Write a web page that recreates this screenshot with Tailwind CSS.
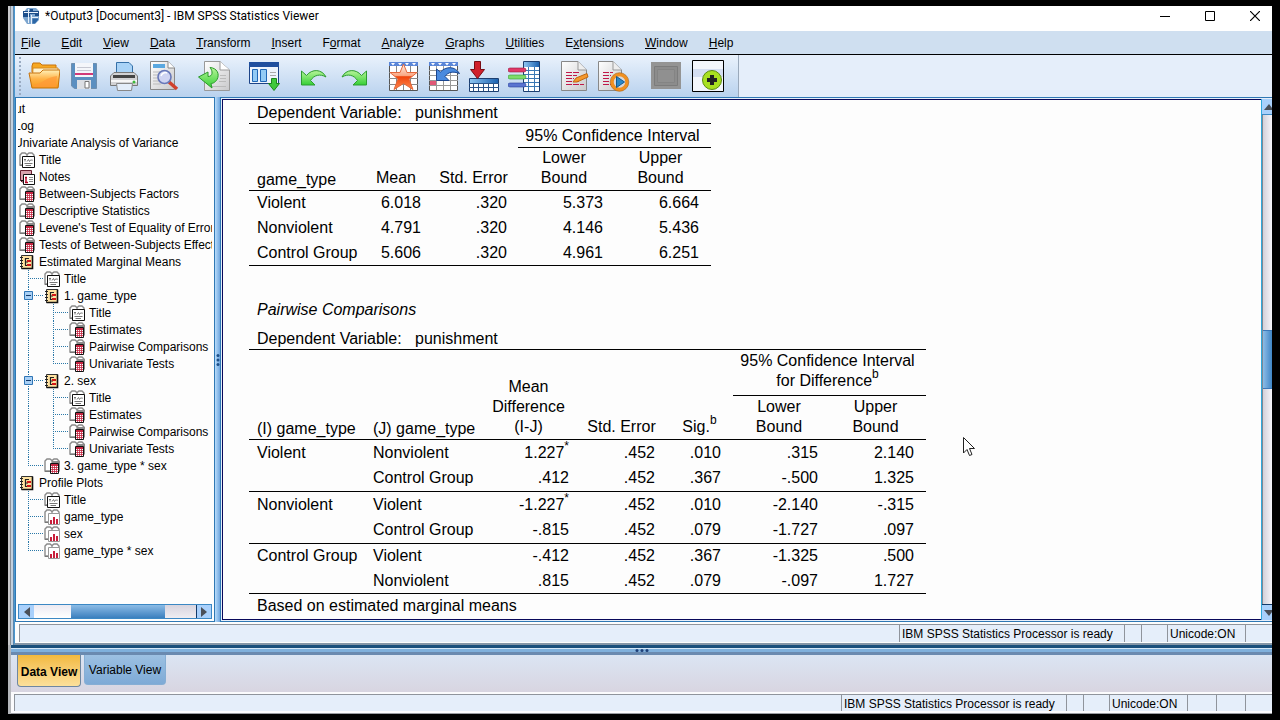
<!DOCTYPE html>
<html lang="en">
  <head>
    <meta charset="UTF-8" />
    <meta name="viewport" content="width=device-width, initial-scale=1.0" />
    <title>*Output3 [Document3] - IBM SPSS Statistics Viewer</title>
    <script src="https://cdn.jsdelivr.net/npm/@tailwindcss/browser@4"></script>
  </head>
  <body
    class="h-screen overflow-hidden bg-black px-2 py-1.5 flex flex-col text-black text-xs font-['Liberation_Sans',Arial,sans-serif]"
  >
    <!-- Shared icons -->
    <svg class="absolute size-0" aria-hidden="true">
      <defs>
        <linearGradient id="gFolder" x1="0" y1="0" x2="0" y2="1">
          <stop offset="0" stop-color="#fff0b8" />
          <stop offset="0.5" stop-color="#ffb347" />
          <stop offset="1" stop-color="#f59a1c" />
        </linearGradient>
        <linearGradient id="gPaper" x1="0" y1="0" x2="1" y2="1">
          <stop offset="0" stop-color="#ffffff" />
          <stop offset="1" stop-color="#c9c9cb" />
        </linearGradient>
        <linearGradient id="gStar" x1="0" y1="0" x2="0" y2="1">
          <stop offset="0" stop-color="#fff0e8" />
          <stop offset="0.45" stop-color="#f9a884" />
          <stop offset="0.5" stop-color="#f0450c" />
          <stop offset="1" stop-color="#ff8a50" />
        </linearGradient>
        <linearGradient id="gBlue" x1="0" y1="0" x2="1" y2="0">
          <stop offset="0" stop-color="#8cc4f0" />
          <stop offset="1" stop-color="#1c62b0" />
        </linearGradient>
        <linearGradient id="gGreen" x1="0" y1="0" x2="0" y2="1">
          <stop offset="0" stop-color="#b8f59a" />
          <stop offset="1" stop-color="#35cf35" />
        </linearGradient>
        <symbol id="book" viewBox="0 0 16 16">
          <path d="M1 3 L3 1 H6 L8 2.5 L10 1 H13 L15 3 V13 H9 L8 14 L7 13 H1Z" fill="#fff" stroke="#8a8a8a" stroke-width="1.4" />
          <path d="M8 3 V13 M1 13.5 H6" stroke="#777" fill="none" />
        </symbol>
        <symbol id="tree-title" viewBox="0 0 16 16">
          <use href="#book" width="16" height="16" />
          <path d="M3.5 4.5 H15.5 V15.5 H3.5Z" fill="#fff" stroke="#111" />
          <path d="M5 7.5 H7 M6 7.5 V9.5 M8 9.5 L9.5 7.5 L10.5 9.5 L12 7.5 M13 7.5 V9 M5.5 11.5 H13.5 M6.5 13.5 H12" stroke="#777" fill="none" />
        </symbol>
        <symbol id="tree-notes" viewBox="0 0 16 16">
          <path d="M1.5 1.5 H12.5 V13 H3 L1.5 11.5Z" fill="#d9a3ae" stroke="#6a2030" />
          <path d="M1.5 11.5 H5" stroke="#111" />
          <path d="M4.5 5.5 H15.5 V15.5 H4.5Z" fill="#fff" stroke="#111" />
          <path d="M6 8.5 H8 M7 9 V13 M6 13.5 H9" stroke="#b00020" stroke-width="1.4" />
          <path d="M10 8.5 H14 M10 10.5 H14 M10 12.5 H14" stroke="#888" />
        </symbol>
        <symbol id="tree-table" viewBox="0 0 16 16">
          <use href="#book" width="16" height="16" />
          <path d="M8 3 H16 V13 H8Z" fill="#8b8b8b" />
          <path d="M6.5 5.5 H14.5 V15.5 H6.5Z" fill="#fff" stroke="#111" />
          <path d="M7 7 H14" stroke="#c42440" stroke-width="2" />
          <path d="M7 9.5 H14 M7 11.5 H14 M7 13.5 H14 M8.5 6 V15 M10.5 6 V15 M12.5 6 V15" stroke="#c42440" stroke-width="0.8" />
        </symbol>
        <symbol id="tree-chart" viewBox="0 0 16 16">
          <use href="#book" width="16" height="16" />
          <path d="M4.5 4.5 H15.5 V15.5 H4.5Z" fill="#fff" stroke="#999" />
          <path d="M6 11 H8 V15 H6Z M9 8 H11 V15 H9Z M12 10 H14 V15 H12Z" fill="#c8203c" />
        </symbol>
        <symbol id="tree-folder" viewBox="0 0 16 16">
          <path d="M2.5 1.5 H13.5 V14.5 H2.5Z" fill="#ffe2a0" stroke="#333" />
          <path d="M13.5 1.5 V14.5 H2.5" fill="none" stroke="#111" stroke-width="1.6" />
          <path d="M1 3.5 H4 M1 6.5 H4 M1 9.5 H4 M1 12.5 H4" stroke="#222" />
          <path d="M6 4.5 H10 M6 8 H9 M6.5 4 V11.5 M6 11.5 H9" stroke="#222" stroke-width="1.2" />
          <path d="M8 6 H12 V8 H8Z M8 10 H12 V12 H8Z" fill="#d01818" />
        </symbol>
        <symbol id="guide-line" viewBox="0 0 25 17">
          <path d="M9.5 0 V17" stroke="#2a78a8" stroke-dasharray="1 1" />
        </symbol>
        <symbol id="guide-tee" viewBox="0 0 25 17">
          <path d="M9.5 0 V17 M9 8.5 H24" stroke="#2a78a8" stroke-dasharray="1 1" />
        </symbol>
        <symbol id="guide-end" viewBox="0 0 25 17">
          <path d="M9.5 0 V9 M9 8.5 H24" stroke="#2a78a8" stroke-dasharray="1 1" />
        </symbol>
        <symbol id="guide-box" viewBox="0 0 25 17">
          <path d="M9.5 0 V17 M9 8.5 H24" stroke="#2a78a8" stroke-dasharray="1 1" />
          <path d="M5.5 4.5 H13.5 V12.5 H5.5Z" fill="#a9d0f5" stroke="#2f75b5" />
          <path d="M7 8.5 H12" stroke="#123a6a" />
        </symbol>
      </defs>
    </svg>

    <!-- Output viewer window -->
    <div class="flex-1 min-h-0 flex bg-[#1f5f92]">
      <div class="w-1.5 shrink-0 flex">
        <div class="w-[2px] bg-[#c9c9cb]"></div>
        <div class="w-px bg-[#8a8f96]"></div>
        <div class="w-[2px] bg-[#c3d0de]"></div>
        <div class="w-px bg-[#5a86ae]"></div>
      </div>
      <div class="flex-1 min-w-0 flex flex-col bg-[#fdfdfd] border-l border-[#4a98d0] border-b-2 border-b-[#8496a8]">
        <header class="h-[25px] shrink-0 flex items-center pl-2 pb-[5px] pr-3 bg-white">
          <svg class="size-4" viewBox="0 0 16 16">
            <path d="M4 0 H13 L16 3 V12 L12 16 H4 L0 10 V5Z" fill="#7da6cf" />
            <path d="M0 3 H7 V1 H10 V3 H16 V8 H12 V6 H7 V9 H0Z" fill="#1d4f8c" />
            <path d="M1 4.5 H15 M5.5 1 V15 M8.5 7 V16 M8 9.5 H15" stroke="#e8f1fb" stroke-width="1" />
            <path d="M9.5 10.5 H15 V12 L12 15.5 H9.5Z" fill="#2c66a6" />
          </svg>
          <h1 class="ml-1.5 text-xs font-['Roboto','Open_Sans',sans-serif]">*Output3 [Document3] - IBM SPSS Statistics Viewer</h1>
          <div class="ml-auto flex gap-[35px]">
            <button aria-label="Minimize"><svg class="w-2.5 h-2.5" viewBox="0 0 10 10"><path d="M0 5.5 H10" stroke="#000" /></svg></button>
            <button aria-label="Maximize"><svg class="w-2.5 h-2.5" viewBox="0 0 10 10"><path d="M0.5 0.5 H9.5 V9.5 H0.5Z" stroke="#000" fill="none" /></svg></button>
            <button aria-label="Close"><svg class="w-2.5 h-2.5" viewBox="0 0 10 10"><path d="M0 0 L10 10 M10 0 L0 10" stroke="#000" stroke-width="1.2" /></svg></button>
          </div>
        </header>

        <nav class="h-6 shrink-0 flex items-center gap-[21px] pl-1.5 bg-[#cfdff0] border-b border-black">
          <button><u>F</u>ile</button>
          <button><u>E</u>dit</button>
          <button><u>V</u>iew</button>
          <button><u>D</u>ata</button>
          <button><u>T</u>ransform</button>
          <button><u>I</u>nsert</button>
          <button>F<u>o</u>rmat</button>
          <button><u>A</u>nalyze</button>
          <button><u>G</u>raphs</button>
          <button><u>U</u>tilities</button>
          <button>E<u>x</u>tensions</button>
          <button><u>W</u>indow</button>
          <button><u>H</u>elp</button>
        </nav>

        <!-- Toolbar -->
        <div class="h-[42px] shrink-0 bg-[#e5eefa] flex">
          <div class="w-[724px] flex items-center gap-[18px] pl-1 bg-linear-to-b from-[#eaf2fc] to-[#b9d2ee] border-r border-[#9aa9bb]">
            <div class="-mr-[11px] h-[38px] border-l-2 border-dotted border-[#9aabc2]"></div>
            <div class="flex gap-2">
              <button aria-label="Open">
                <svg class="size-8" viewBox="0 0 32 32">
                  <path d="M4 6 L5 3 H12 L14 5 H28 V12 H4Z" fill="#f7a823" stroke="#c8730c" />
                  <path d="M5 8 H30 V27 H4Z" fill="#fff3cf" stroke="#d58a20" />
                  <path d="M4 28 L1 13 H12 L15 10 H32 L30 28Z" fill="url(#gFolder)" stroke="#c8730c" />
                  <path d="M6 25 C14 24 18 17 29 16 L28 27 H6Z" fill="#ff9838" opacity="0.7" />
                </svg>
              </button>
              <button aria-label="Save">
                <svg class="size-8" viewBox="0 0 32 32">
                  <path d="M3.5 3.5 H28.5 V28.5 H6.5 L3.5 26Z" fill="#5b8fc0" stroke="#6f8fae" />
                  <path d="M7 3 H25 V17 H7Z" fill="#f4f6fa" />
                  <path d="M9 7.5 H23 M9 10.5 H23" stroke="#c6c8d2" />
                  <path d="M7 14 H25" stroke="#d23a78" stroke-width="2" />
                  <path d="M9 20 H23 V29 H9Z" fill="#dcdfe4" />
                  <path d="M17 21.5 H21 V28 H17Z" fill="#fff" stroke="#777" />
                </svg>
              </button>
              <button aria-label="Print">
                <svg class="size-8" viewBox="0 0 32 32">
                  <path d="M8.5 2.5 H21 L24.5 6 V15 H8.5Z" fill="#a9d3f7" stroke="#3570a8" />
                  <path d="M6 12.5 H26 L29.5 16 V25.5 H2.5 V16Z" fill="#d2d2d4" stroke="#777" />
                  <path d="M5 15 H27 V18 H5Z" fill="#444" />
                  <path d="M3 20 H29 V22 H3Z" fill="#f7f7f7" />
                  <path d="M8.5 23.5 H24.5 L23.5 30.5 H9.5Z" fill="#e4eefa" stroke="#888" />
                  <circle cx="26" cy="22" r="1.5" fill="#3cb83c" />
                </svg>
              </button>
              <button aria-label="Print preview">
                <svg class="size-8" viewBox="0 0 32 32">
                  <path d="M2.5 1.5 H20 L26.5 8 V29.5 H2.5Z" fill="url(#gPaper)" stroke="#888" />
                  <path d="M20 1.5 V8 H26.5" fill="#fff" stroke="#888" />
                  <path d="M5 4 H17 V8 H5Z" fill="#5aa8e0" />
                  <path d="M5 12 H12 M5 15 H10 M5 18 H10 M5 21 H11 M5 24 H13" stroke="#bbb" />
                  <path d="M21 22 L29 29" stroke="#d0402c" stroke-width="3.5" />
                  <circle cx="16.5" cy="17" r="6.5" fill="#cfd4f2" stroke="#6878b8" stroke-width="1.6" />
                  <path d="M13 16 C14 13 17 12 19 13" stroke="#fff" stroke-width="1.5" fill="none" />
                </svg>
              </button>
            </div>
            <button aria-label="Export">
              <svg class="size-8" viewBox="0 0 32 32">
                <path d="M6.5 1.5 H22 L31.5 10 V30.5 H6.5Z" fill="url(#gPaper)" stroke="#999" />
                <path d="M22 1.5 V10 H31.5" fill="#fff" stroke="#999" />
                <path d="M22 15.5 H28 M22 18.5 H28 M21 21.5 H28 M14 26.5 H28" stroke="#bbb" />
                <path d="M0.5 17 L10 12 V16.5 C15 16.5 15 11 12 7.500 C19 8 22 14 19 19.500 C17 23 14 23.500 13 23.500 L14 28Z" fill="url(#gGreen)" stroke="#2a9a2a" />
              </svg>
            </button>
            <button aria-label="Recall dialogs">
              <svg class="size-8" viewBox="0 0 32 32">
                <path d="M1.5 2.5 H30.5 V23.5 H1.5Z" fill="#eef4fc" stroke="#1d4488" />
                <path d="M1 2 H31 V7 H1Z" fill="#204f9e" />
                <path d="M4.5 9.5 H9.5 V21.5 H4.5Z M12.5 9.5 H18.5 V21.5 H12.5Z" fill="#93cbf5" stroke="#1f66b5" />
                <path d="M22 12.5 H28 M22 15.5 H28" stroke="#aaa" />
                <path d="M23.5 18.5 H28.5 V23.5 H31.5 L26 30.5 L20.5 23.5 H23.5Z" fill="#3fc83c" stroke="#1d861d" />
              </svg>
            </button>
            <div class="flex gap-2">
              <button aria-label="Undo">
                <svg class="size-8" viewBox="0 0 32 32">
                  <path d="M3.5 11 V25 H17 L12.5 20.5 C16 15 22 13.5 28 17 C24 9 14 8.5 8.5 15.5Z" fill="url(#gGreen)" stroke="#2d9c30" />
                </svg>
              </button>
              <button aria-label="Redo">
                <svg class="size-8" viewBox="0 0 32 32">
                  <path d="M28.5 11 V25 H15 L19.5 20.5 C16 15 10 13.5 4 17 C8 9 18 8.5 23.5 15.5Z" fill="url(#gGreen)" stroke="#2d9c30" />
                </svg>
              </button>
            </div>
            <div class="flex gap-2">
              <button aria-label="Go to data">
                <svg class="size-8" viewBox="0 0 32 32">
                  <path d="M1.5 2.5 H29.5 V30.5 H1.5Z" fill="#fff" stroke="#555" />
                  <path d="M1 2 H30 V6 H1Z" fill="#5a86d8" />
                  <path d="M3 3 H7 L5 5.5Z M10 3 H14 L12 5.5Z M17 3 H21 L19 5.5Z M24 3 H28 L26 5.5Z" fill="#fff" />
                  <path d="M1 12.5 H30 M1 18.5 H30 M1 24.5 H30 M8.5 6 V30 M15.5 6 V30 M22.5 6 V30" stroke="#888" />
                  <path d="M15.5 4 L19 12.5 H29 L21 19 L25 29.5 L15.5 23.5 L6 29.5 L10 19 L2 12.5 H12Z" fill="url(#gStar)" stroke="#e4683c" />
                </svg>
              </button>
              <button aria-label="Go to case">
                <svg class="size-8" viewBox="0 0 32 32">
                  <path d="M1.5 2.5 H29.5 V30.5 H1.5Z" fill="#fff" stroke="#555" />
                  <path d="M1 2 H30 V6 H1Z" fill="#5a86d8" />
                  <path d="M3 3 H7 L5 5.5Z M10 3 H14 L12 5.5Z M17 3 H21 L19 5.5Z M24 3 H28 L26 5.5Z" fill="#fff" />
                  <path d="M1 10.5 H30 M1 15.5 H30 M1 20.5 H30 M1 25.5 H30 M8.5 6 V30 M15.5 6 V30 M22.5 6 V30" stroke="#999" />
                  <path d="M2 21 H8 V25 H2Z" fill="#e05878" />
                  <path d="M8.5 9 V20.5 H21 L17 16.5 C20 12 25 11 31.5 13.5 C27 6 18 6 12.5 12Z" fill="#4a8ade" stroke="#1a4690" />
                </svg>
              </button>
              <button aria-label="Go to variable">
                <svg class="size-8" viewBox="0 0 32 32">
                  <path d="M1.5 18.5 H30.5 V31.5 H1.5Z" fill="#fff" stroke="#1d3f70" />
                  <path d="M2 19 H30 V23 H2Z" fill="url(#gBlue)" />
                  <path d="M1 23.5 H31 M1 27.5 H31 M5.5 23 V31 M10.5 23 V31 M15.5 23 V31 M20.5 23 V31 M25.5 23 V31" stroke="#2a5488" />
                  <path d="M6.5 1.5 H12.5 V9.5 H16.5 L9.5 18.5 L2.5 9.5 H6.5Z" fill="#d0202c" stroke="#7a0c14" />
                </svg>
              </button>
              <button aria-label="Variables">
                <svg class="size-8" viewBox="0 0 32 32">
                  <path d="M15.5 1.5 H31.5 V31.5 H15.5Z" fill="#fff" stroke="#1d3f70" />
                  <path d="M16 2 H31 V7 H16Z" fill="url(#gBlue)" />
                  <path d="M16 10.5 H31 M16 14.5 H31 M16 18.5 H31 M16 22.5 H31 M16 26.5 H31 M20.5 7 V31 M26.5 7 V31" stroke="#3b78b4" />
                  <rect x="0" y="8" width="18" height="4" rx="2" fill="#e03868" stroke="#98183c" stroke-width="0.6" />
                  <rect x="0" y="15" width="18" height="4" rx="2" fill="#7edc6a" stroke="#2f9a34" stroke-width="0.6" />
                  <rect x="0" y="23" width="18" height="4" rx="2" fill="#5a74d0" stroke="#28409a" stroke-width="0.6" />
                </svg>
              </button>
            </div>
            <div class="flex gap-2">
              <button aria-label="Edit script">
                <svg class="size-8" viewBox="0 0 32 32">
                  <path d="M3.5 1.5 H20 L28.5 10 V30.5 H3.5Z" fill="url(#gPaper)" stroke="#888" />
                  <path d="M20 1.5 V10 H28.5" fill="#eee" stroke="#999" />
                  <path d="M8 12.5 H22 M8 15.5 H19 M8 18.5 H16 M8 21.5 H22 M8 24.5 H26" stroke="#c01848" stroke-dasharray="6 1" />
                  <path d="M15 22 L18 18 L29 13.5 L30 17 L19 22Z" fill="#f5982c" stroke="#c06810" />
                </svg>
              </button>
              <button aria-label="Run script">
                <svg class="size-8" viewBox="0 0 32 32">
                  <path d="M0.5 1.5 H15 L23.5 10 V30.5 H0.5Z" fill="url(#gPaper)" stroke="#888" />
                  <path d="M15 1.5 V10 H23.5" fill="#eee" stroke="#999" />
                  <path d="M5 12.5 H15 M5 15.5 H13 M5 18.5 H12 M5 21.5 H12 M5 24.5 H14" stroke="#c01848" stroke-dasharray="6 1" />
                  <circle cx="21.5" cy="22" r="7.5" fill="#d8d8dc" stroke="#f09020" stroke-width="3.5" />
                  <circle cx="21.5" cy="22" r="9.3" fill="none" stroke="#a86010" stroke-width="0.6" />
                  <path d="M18.5 16.5 L26.5 22 L18.5 27.5Z" fill="#2a88c8" stroke="#135a90" />
                </svg>
              </button>
            </div>
            <div class="flex gap-2.5 pl-0.5">
              <button aria-label="Designate window">
                <svg class="size-8" viewBox="0 0 32 32">
                  <path d="M1 2 H31 V29 H1Z" fill="#949494" />
                  <path d="M4.5 6.5 H27.5 V25.5 H4.5Z" fill="#8c8c8c" stroke="#7c7c7c" />
                  <path d="M7.5 9.5 H24.5 V22.5 H7.5Z" fill="#909090" stroke="#848484" />
                </svg>
              </button>
              <button aria-label="Add extension">
                <svg class="size-8" viewBox="0 0 32 32">
                  <path d="M0.5 0.5 H31.5 V31.5 H0.5Z" fill="#f3f6fc" stroke="#000" />
                  <path d="M1 9 H31 V17 H1Z" fill="#d4def2" />
                  <circle cx="20" cy="20" r="9.5" fill="#a8e020" stroke="#5c8c10" />
                  <path d="M18 15 H22 V18 H25 V22 H22 V25 H18 V22 H15 V18 H18Z" fill="#222" />
                </svg>
              </button>
            </div>
          </div>
        </div>

        <div class="flex-1 min-h-0 flex bg-[#e5eefa]">
          <!-- Outline pane -->
          <aside class="w-[200px] shrink-0 flex flex-col border border-[#2f78b4] bg-[#fdfdfd] px-0.5 py-0.5">
            <div class="flex-1 min-h-0 overflow-hidden">
              <ul id="outline" class="-ml-[49px]"></ul>
            </div>
            <div class="h-[15px] shrink-0 flex border border-[#3c88c4]">
              <button class="w-[15px] flex items-center justify-center bg-[#a9d0fb]" aria-label="Scroll left">
                <svg class="w-1.5 h-2.5" viewBox="0 0 6 10"><path d="M6 0 V10 L0 5Z" fill="#4a4f58" /></svg>
              </button>
              <div class="flex-1 flex bg-linear-to-b from-[#d8d4de] to-[#efedf2]">
                <div class="w-[37px] bg-linear-to-b from-[#eceaf2] to-white"></div>
                <div class="w-[94px] bg-linear-to-b from-[#8cbce6] to-[#3a7fbe]"></div>
              </div>
              <button class="w-[15px] flex items-center justify-center bg-[#a9d0fb] border-l border-[#123a6a]" aria-label="Scroll right">
                <svg class="w-1.5 h-2.5" viewBox="0 0 6 10"><path d="M0 0 V10 L6 5Z" fill="#4a4f58" /></svg>
              </button>
            </div>
          </aside>

          <div class="w-[5px] shrink-0 flex items-center justify-center bg-linear-to-r from-[#b8dcfb] to-[#6fa6de]">
            <svg class="w-1 h-3" viewBox="0 0 4 12">
              <circle cx="2" cy="1.5" r="1.5" fill="#1d4f88" />
              <circle cx="2" cy="6" r="1.5" fill="#1d4f88" />
              <circle cx="2" cy="10.5" r="1.5" fill="#1d4f88" />
            </svg>
          </div>

          <!-- Output pane -->
          <main class="flex-1 min-w-0 flex border-t border-l border-b border-[#2f78b4] p-px pr-0 bg-[#e5eefa]">
            <div class="flex-1 min-w-0 relative overflow-hidden bg-[#fdfdfd] border-t border-l border-b border-[#08085a] pl-[26px] pt-[3px] text-base leading-5">
              <table class="table-fixed w-[462px] border-collapse">
                <caption class="text-left pl-2 whitespace-pre">Dependent Variable:   punishment</caption>
                <colgroup>
                  <col class="w-[114px]" />
                  <col class="w-[66px]" />
                  <col class="w-[89px]" />
                  <col class="w-[96px]" />
                  <col class="w-[97px]" />
                </colgroup>
                <thead class="border-y border-black">
                  <tr class="h-6">
                    <th rowspan="2" class="font-normal text-left align-bottom pl-2">game_type</th>
                    <th rowspan="2" class="font-normal align-bottom pb-0.5">Mean</th>
                    <th rowspan="2" class="font-normal align-bottom pb-0.5">Std. Error</th>
                    <th colspan="2" class="font-normal pr-1 border-b border-black">95% Confidence Interval</th>
                  </tr>
                  <tr class="h-[43px]">
                    <th class="font-normal align-bottom pr-1 pb-0.5">Lower<br />Bound</th>
                    <th class="font-normal align-bottom pr-1 pb-0.5">Upper<br />Bound</th>
                  </tr>
                </thead>
                <tbody class="border-b border-black text-right">
                  <tr class="h-[25px]">
                    <th class="font-normal text-left pl-2">Violent</th>
                    <td class="pr-2">6.018</td><td class="pr-[11px]">.320</td><td class="pr-[11px]">5.373</td><td class="pr-3">6.664</td>
                  </tr>
                  <tr class="h-[25px]">
                    <th class="font-normal text-left pl-2">Nonviolent</th>
                    <td class="pr-2">4.791</td><td class="pr-[11px]">.320</td><td class="pr-[11px]">4.146</td><td class="pr-3">5.436</td>
                  </tr>
                  <tr class="h-[25px]">
                    <th class="font-normal text-left pl-2">Control Group</th>
                    <td class="pr-2">5.606</td><td class="pr-[11px]">.320</td><td class="pr-[11px]">4.961</td><td class="pr-3">6.251</td>
                  </tr>
                </tbody>
              </table>

              <h2 class="mt-[34px] mb-[9px] pl-2 italic">Pairwise Comparisons</h2>

              <table class="table-fixed w-[677px] border-collapse">
                <caption class="text-left pl-2 whitespace-pre">Dependent Variable:   punishment</caption>
                <colgroup>
                  <col class="w-[116px]" />
                  <col class="w-[115px]" />
                  <col class="w-[97px]" />
                  <col class="w-[89px]" />
                  <col class="w-[67px]" />
                  <col class="w-[96px]" />
                  <col class="w-[97px]" />
                </colgroup>
                <thead class="border-y border-black">
                  <tr class="h-[46px]">
                    <th rowspan="2" class="font-normal text-left align-bottom pl-2">(I) game_type</th>
                    <th rowspan="2" class="font-normal text-left align-bottom pl-2">(J) game_type</th>
                    <th rowspan="2" class="font-normal align-bottom pb-0.5">Mean<br />Difference<br />(I-J)</th>
                    <th rowspan="2" class="font-normal align-bottom pb-0.5">Std. Error</th>
                    <th rowspan="2" class="font-normal align-bottom pb-0.5">Sig.<sup class="text-xs -top-2">b</sup></th>
                    <th colspan="2" class="font-normal align-top pt-px pr-1 border-b border-black">95% Confidence Interval<br />for Difference<sup class="text-xs -top-2">b</sup></th>
                  </tr>
                  <tr class="h-11">
                    <th class="font-normal align-bottom pr-1 pb-0.5">Lower<br />Bound</th>
                    <th class="font-normal align-bottom pr-1 pb-0.5">Upper<br />Bound</th>
                  </tr>
                </thead>
                <tbody class="border-b border-black text-right">
                  <tr class="h-[26px]">
                    <th class="font-normal text-left pl-2">Violent</th>
                    <th class="font-normal text-left pl-2">Nonviolent</th>
                    <td class="pr-2">1.227<sup class="text-xs -top-2">*</sup></td><td class="pr-[11px]">.452</td><td class="pr-3">.010</td><td class="pr-[11px]">.315</td><td class="pr-3">2.140</td>
                  </tr>
                  <tr class="h-[26px]">
                    <td></td>
                    <th class="font-normal text-left pl-2">Control Group</th>
                    <td class="pr-2">.412</td><td class="pr-[11px]">.452</td><td class="pr-3">.367</td><td class="pr-[11px]">-.500</td><td class="pr-3">1.325</td>
                  </tr>
                </tbody>
                <tbody class="border-b border-black text-right">
                  <tr class="h-[26px]">
                    <th class="font-normal text-left pl-2">Nonviolent</th>
                    <th class="font-normal text-left pl-2">Violent</th>
                    <td class="pr-2">-1.227<sup class="text-xs -top-2">*</sup></td><td class="pr-[11px]">.452</td><td class="pr-3">.010</td><td class="pr-[11px]">-2.140</td><td class="pr-3">-.315</td>
                  </tr>
                  <tr class="h-[26px]">
                    <td></td>
                    <th class="font-normal text-left pl-2">Control Group</th>
                    <td class="pr-2">-.815</td><td class="pr-[11px]">.452</td><td class="pr-3">.079</td><td class="pr-[11px]">-1.727</td><td class="pr-3">.097</td>
                  </tr>
                </tbody>
                <tbody class="border-b border-black text-right">
                  <tr class="h-[25px]">
                    <th class="font-normal text-left pl-2">Control Group</th>
                    <th class="font-normal text-left pl-2">Violent</th>
                    <td class="pr-2">-.412</td><td class="pr-[11px]">.452</td><td class="pr-3">.367</td><td class="pr-[11px]">-1.325</td><td class="pr-3">.500</td>
                  </tr>
                  <tr class="h-[25px]">
                    <td></td>
                    <th class="font-normal text-left pl-2">Nonviolent</th>
                    <td class="pr-2">.815</td><td class="pr-[11px]">.452</td><td class="pr-3">.079</td><td class="pr-[11px]">-.097</td><td class="pr-3">1.727</td>
                  </tr>
                </tbody>
              </table>
              <p class="pl-2 pt-0.5">Based on estimated marginal means</p>

              <!-- Mouse pointer -->
              <svg class="absolute left-[740px] top-[337px] w-3 h-5" viewBox="0 0 12 20">
                <path d="M0.5 0.5 V16 L4 12.5 L6.5 18.5 L9 17.5 L6.5 11.5 H11.5Z" fill="#fff" stroke="#222" />
              </svg>
            </div>

            <div class="w-[11px] shrink-0 flex flex-col border-l border-[#2fa8dc] bg-linear-to-r from-[#cfcdd6] to-[#f6f5fa] overflow-hidden">
              <button class="h-4 shrink-0 flex items-center pl-0.5 bg-[#a9d0fb] border-b border-[#3c88c4]" aria-label="Scroll up">
                <svg class="w-2 h-1.5" viewBox="0 0 8 6"><path d="M0 6 L5 0 L8 4 V6Z" fill="#4a4f58" /></svg>
              </button>
              <div class="flex-1 flex flex-col border-l border-[#7d8894]">
                <div class="grow-[214]"></div>
                <div class="h-[59px] shrink-0 border-y border-[#3c78b8] bg-linear-to-r from-[#8cbce6] to-[#3f86c6]"></div>
                <div class="grow-[215]"></div>
              </div>
              <button class="h-4 shrink-0 flex items-center pl-0.5 bg-[#a9d0fb] border-t border-[#123a6a]" aria-label="Scroll down">
                <svg class="w-2 h-1.5" viewBox="0 0 8 6"><path d="M0 0 H8 V2 L5 6Z" fill="#4a4f58" /></svg>
              </button>
            </div>
          </main>
        </div>

        <!-- Viewer status bar -->
        <footer class="shrink-0 flex h-[21px] pt-0.5 pb-px pl-1 leading-[18px]">
          <div class="flex-1 border-t border-l border-[#8f949c] bg-[#e5eefa]"></div>
          <div class="w-[225px] pl-0.5 border-t border-l border-[#8f949c] bg-[#e5eefa] whitespace-nowrap">IBM SPSS Statistics Processor is ready</div>
          <div class="w-[17px] border-t border-l border-[#8f949c] bg-[#e5eefa]"></div>
          <div class="w-[26px] border-t border-l border-[#8f949c] bg-[#e5eefa]"></div>
          <div class="w-[78px] pl-0.5 border-t border-l border-[#8f949c] bg-[#e5eefa]">Unicode:ON</div>
          <div class="w-[27px] border-t border-l border-[#8f949c] bg-[#e5eefa]"></div>
        </footer>
      </div>
    </div>

    <!-- Data editor window behind the viewer -->
    <div class="shrink-0 flex flex-col border-l-[3px] border-[#b4b6ba] bg-[#1f5f92]">
      <div class="h-[3px] bg-[#1a4f7c]"></div>
      <div class="h-px bg-[#d4e6f6]"></div>
      <div class="h-[3px] bg-[#7fb0dc] flex items-center justify-center">
        <svg class="w-3.5 h-[3px]" viewBox="0 0 14 3">
          <circle cx="2" cy="1.5" r="1.5" fill="#1d3f78" />
          <circle cx="7" cy="1.5" r="1.5" fill="#1d3f78" />
          <circle cx="12" cy="1.5" r="1.5" fill="#1d3f78" />
        </svg>
      </div>
      <div class="h-[3px] bg-[#6a8ab0]"></div>
      <div class="h-[37px] flex items-start gap-[3px] pl-1.5 bg-linear-to-b from-[#dbe5f3] to-[#d8d5e1]">
        <button class="h-8 w-16 pt-0.5 border border-t-0 border-[#6f87a0] rounded-b bg-linear-to-b from-[#f2b93c] to-[#fce09a] font-bold whitespace-nowrap">Data View</button>
        <button class="h-[30px] w-[82px] border border-t-0 border-[#86aed4] rounded-b bg-linear-to-b from-[#9cc0e2] to-[#7eaad6] whitespace-nowrap">Variable View</button>
      </div>
      <footer class="flex h-[22px] pt-0.5 pb-0.5 pl-[3px] bg-[#fbfbfd] border-b border-[#9a9ca2] leading-[18px]">
        <div class="flex-1 border-t border-l border-[#8f949c] bg-[#e5eefa]"></div>
        <div class="w-[225px] pl-0.5 border-t border-l border-[#8f949c] bg-[#e5eefa] whitespace-nowrap">IBM SPSS Statistics Processor is ready</div>
        <div class="w-[17px] border-t border-l border-[#8f949c] bg-[#e5eefa]"></div>
        <div class="w-[26px] border-t border-l border-[#8f949c] bg-[#e5eefa]"></div>
        <div class="w-[78px] pl-0.5 border-t border-l border-[#8f949c] bg-[#e5eefa]">Unicode:ON</div>
        <div class="w-[29px] border-t border-l border-[#8f949c] bg-[#e5eefa]"></div>
        <div class="w-[29px] border-t border-l border-[#8f949c] bg-[#e5eefa]"></div>
        <div class="w-[27px] border-t border-l border-[#8f949c] bg-[#e5eefa]"></div>
      </footer>
    </div>

    <script>
      // guides: one entry per indent level, "" leaves the cell blank
      const items = [
        { label: "Output", icon: "folder", guides: [] },
        { label: "Log", icon: "notes", guides: ["tee"] },
        { label: "Univariate Analysis of Variance", icon: "folder", guides: ["box"] },
        { label: "Title", icon: "title", guides: ["", ""] },
        { label: "Notes", icon: "notes", guides: ["", ""] },
        { label: "Between-Subjects Factors", icon: "table", guides: ["", ""] },
        { label: "Descriptive Statistics", icon: "table", guides: ["", ""] },
        { label: "Levene's Test of Equality of Error Variances", icon: "table", guides: ["", ""] },
        { label: "Tests of Between-Subjects Effects", icon: "table", guides: ["", ""] },
        { label: "Estimated Marginal Means", icon: "folder", guides: ["", ""] },
        { label: "Title", icon: "title", guides: ["", "", "tee"] },
        { label: "1. game_type", icon: "folder", guides: ["", "", "box"] },
        { label: "Title", icon: "title", guides: ["", "", "line", "tee"] },
        { label: "Estimates", icon: "table", guides: ["", "", "line", "tee"] },
        { label: "Pairwise Comparisons", icon: "table", guides: ["", "", "line", "tee"] },
        { label: "Univariate Tests", icon: "table", guides: ["", "", "line", "end"] },
        { label: "2. sex", icon: "folder", guides: ["", "", "box"] },
        { label: "Title", icon: "title", guides: ["", "", "line", "tee"] },
        { label: "Estimates", icon: "table", guides: ["", "", "line", "tee"] },
        { label: "Pairwise Comparisons", icon: "table", guides: ["", "", "line", "tee"] },
        { label: "Univariate Tests", icon: "table", guides: ["", "", "line", "end"] },
        { label: "3. game_type * sex", icon: "table", guides: ["", "", "end"] },
        { label: "Profile Plots", icon: "folder", guides: ["", ""] },
        { label: "Title", icon: "title", guides: ["", "", "tee"] },
        { label: "game_type", icon: "chart", guides: ["", "", "tee"] },
        { label: "sex", icon: "chart", guides: ["", "", "tee"] },
        { label: "game_type * sex", icon: "chart", guides: ["", "", "end"] },
      ];

      document.getElementById("outline").innerHTML = items
        .map((item) => {
          const guides = item.guides
            .map((g) => `<svg class="w-[25px] h-[17px] shrink-0">${g ? `<use href="#guide-${g}" />` : ""}</svg>`)
            .join("");
          return `
            <li class="flex items-center h-[17px] whitespace-nowrap">
              ${guides}
              <svg class="size-4 shrink-0 mr-1"><use href="#tree-${item.icon}" /></svg>
              <span>${item.label}</span>
            </li>`;
        })
        .join("");
    </script>
  </body>
</html>
